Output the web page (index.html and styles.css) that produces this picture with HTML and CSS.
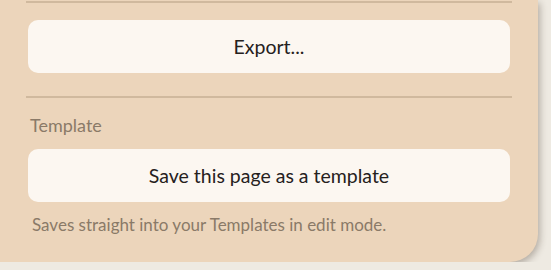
FILE: index.html
```html
<!DOCTYPE html>
<html lang="en">
<head>
  <meta charset="UTF-8">
  <title>Page settings</title>
  <meta name="viewport" content="width=device-width, initial-scale=1.0">
  <link rel="stylesheet" href="styles.css">
</head>
<body>
  <div class="panel">
    <hr class="divider first">
    <button class="action">Export...</button>
    <hr class="divider">
    <div class="section-label">Template</div>
    <button class="action">Save this page as a template</button>
    <p class="hint">Saves straight into your Templates in edit mode.</p>
  </div>
</body>
</html>
```

FILE: styles.css
```css
html, body {
  margin: 0;
  padding: 0;
  background: #eeeae2;
  font-family: Lato, "Open Sans", sans-serif;
  overflow: hidden;
}

.panel {
  width: 538px;
  height: 262px;
  box-sizing: border-box;
  padding: 1px 28px 0 28px;
  background: #ecd5bb;
  border-bottom-right-radius: 28px;
  box-shadow: 2px 3px 7px rgba(60, 45, 30, 0.32);
}

.divider {
  margin: 0 -2px;
  border: 0;
  height: 2px;
  background: #d0b99e;
}

.action {
  display: block;
  width: 100%;
  height: 53px;
  margin: 17px 0 23px;
  border: 0;
  border-radius: 10px;
  background: #fcf7f1;
  color: #26211d;
  font-family: inherit;
  font-size: 19.5px;
}

.section-label {
  margin: 16px 0 0 2px;
  color: #8a7a68;
  font-size: 18px;
  line-height: 22px;
}

.section-label + .action {
  margin-top: 13px;
  margin-bottom: 0;
}

.hint {
  margin: 12px 0 0 4px;
  color: #8a7a68;
  font-size: 17px;
}
```
